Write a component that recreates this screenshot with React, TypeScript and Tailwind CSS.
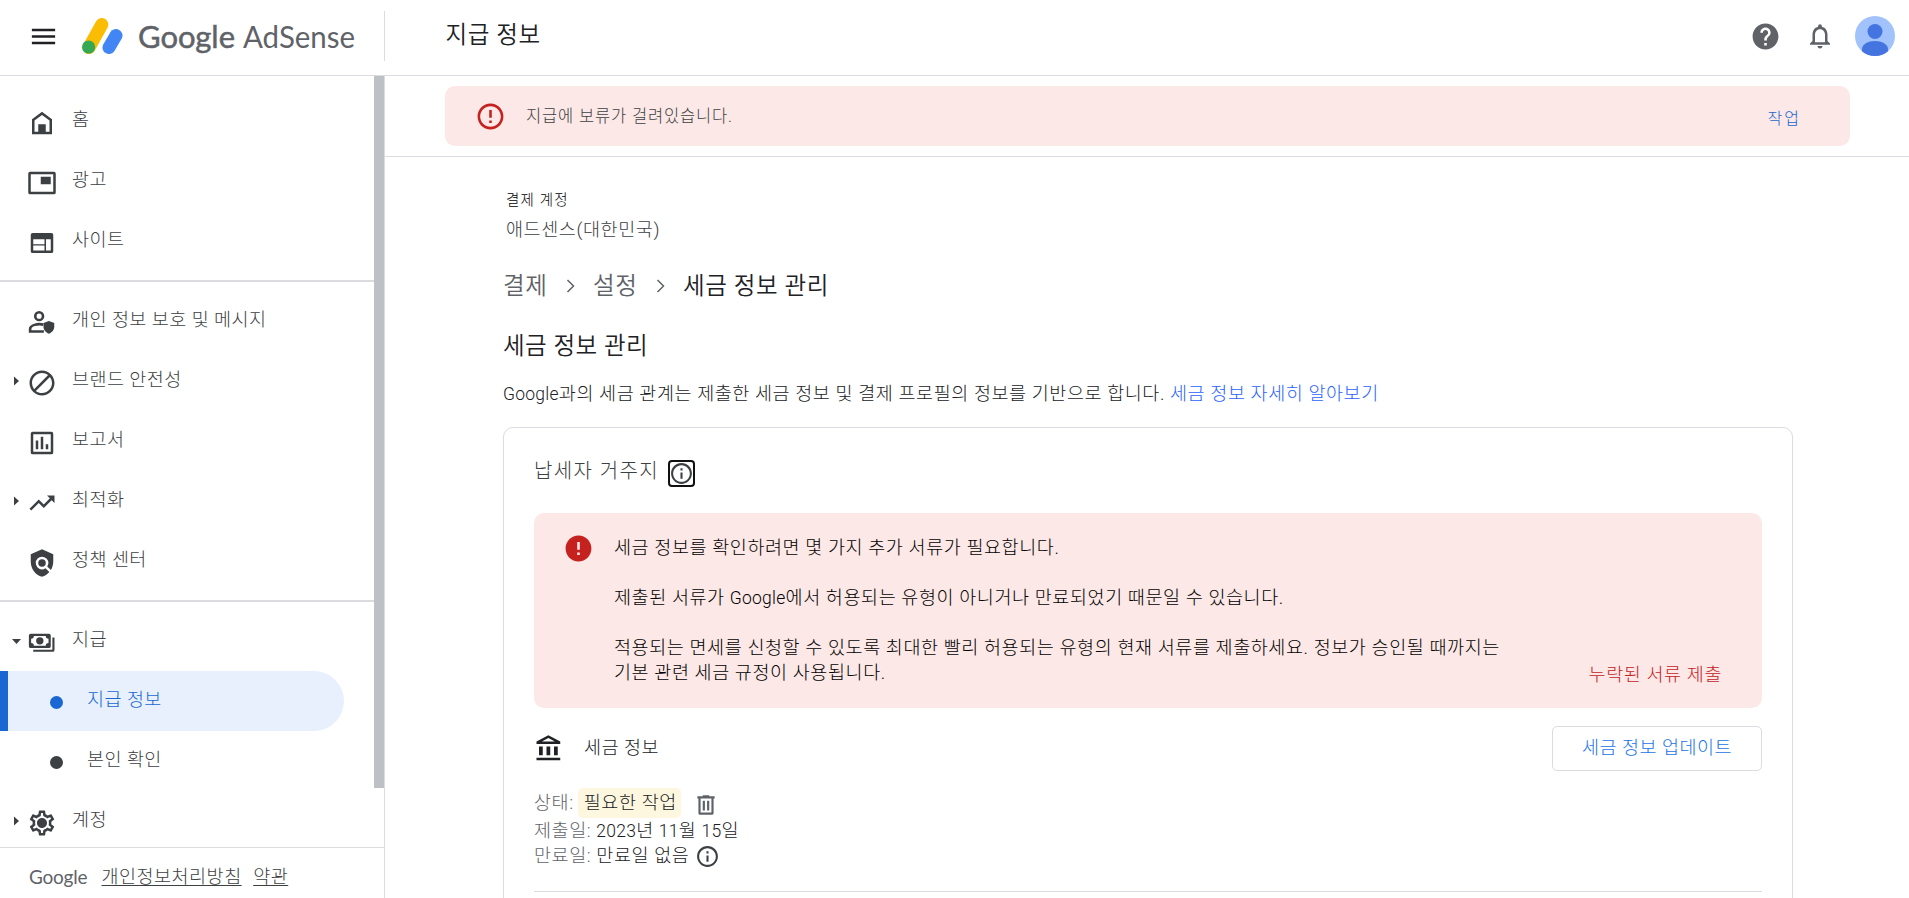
import type { ReactNode } from "react";
import {
  MdBlock,
  MdError,
  MdErrorOutline,
  MdHelp,
  MdInfoOutline,
  MdMenu,
  MdNotificationsNone,
  MdOutlineSettings,
  MdPolicy,
  MdTrendingUp,
} from "react-icons/md";

type NavItem = {
  label: string;
  icon: ReactNode;
  arrow?: "right" | "down";
};

function Icon({ d, size = 30 }: { d: string; size?: number }) {
  return (
    <svg width={size} height={size} viewBox="0 0 24 24" fill="currentColor" fillRule="evenodd">
      <path d={d} />
    </svg>
  );
}

const HOME = "M12 3 4 9v12h16V9zm0 2.5 6 4.5v9h-3v-6H9v6H6v-9z";
const ADS =
  "M2.5 3h19A1.5 1.5 0 0 1 23 4.5v15a1.5 1.5 0 0 1-1.5 1.5h-19A1.5 1.5 0 0 1 1 19.5v-15A1.5 1.5 0 0 1 2.5 3zM3 5v14h18V5zM11 7h8v6h-8z";
const SITES =
  "M4.5 4h15A1.5 1.5 0 0 1 21 5.5v13a1.5 1.5 0 0 1-1.5 1.5h-15A1.5 1.5 0 0 1 3 18.5v-13A1.5 1.5 0 0 1 4.5 4zM5 9v4h9V9zm0 5v4h9v-4zM15.2 9v9H19V9z";
const REPORT =
  "M4.5 3h15A1.5 1.5 0 0 1 21 4.5v15a1.5 1.5 0 0 1-1.5 1.5h-15A1.5 1.5 0 0 1 3 19.5v-15A1.5 1.5 0 0 1 4.5 3zM5 5v14h14V5zM7 10h2v7H7zM11 7h2v10h-2zM15 13h2v4h-2z";
const PAYMENTS =
  "M3 4.5h14.5A1.5 1.5 0 0 1 19 6v8.5a1.5 1.5 0 0 1-1.5 1.5H3a1.5 1.5 0 0 1-1.5-1.5V6A1.5 1.5 0 0 1 3 4.5zM5.5 6.3A2.2 2.2 0 0 1 3.3 8.5V12a2.2 2.2 0 0 1 2.2 2.2H15a2.2 2.2 0 0 1 2.2-2.2V8.5A2.2 2.2 0 0 1 15 6.3zM10.25 7.3a2.95 2.95 0 1 1 0 5.9 2.95 2.95 0 0 1 0-5.9zM20.3 7.5H22v10a1.5 1.5 0 0 1-1.5 1.5H5v-1.7h15.3z";
const TRASH = "M9 3h6v1h5v2h-1v13.5a1.5 1.5 0 0 1-1.5 1.5h-11A1.5 1.5 0 0 1 5 19.5V6H4V4h5zM7 6v13h10V6zM9 8h2v9H9zM13 8h2v9h-2z";
const BANK = "M11.5 1 2 6v2h19V6zm0 2.26L16.71 6H6.29zM4 10h3v7H4zM10 10h3v7h-3zM16 10h3v7h-3zM2 19h19v2H2z";

function PrivacyIcon() {
  return (
    <svg width={30} height={30} viewBox="0 0 24 24" fill="none">
      <circle cx="9.7" cy="6.5" r="3.1" stroke="currentColor" strokeWidth="2.1" />
      <path d="M13 13.3C8.5 12 2.5 14 2.5 16.7v2.1h11" stroke="currentColor" strokeWidth="2.1" />
      <path d="M17.5 10.3l4.3 1.7v3c0 2.6-1.8 4.7-4.3 5.5-2.5-.8-4.3-2.9-4.3-5.5v-3z" fill="currentColor" />
    </svg>
  );
}

function SettingsIcon() {
  return (
    <svg width={30} height={30} viewBox="0 0 24 24">
      <MdOutlineSettings size={24} />
      <circle cx="12" cy="12" r="3.4" fill="currentColor" />
    </svg>
  );
}

const mainItems: NavItem[] = [
  { label: "홈", icon: <Icon d={HOME} /> },
  { label: "광고", icon: <Icon d={ADS} /> },
  { label: "사이트", icon: <Icon d={SITES} /> },
];

const toolItems: NavItem[] = [
  { label: "개인 정보 보호 및 메시지", icon: <PrivacyIcon /> },
  { label: "브랜드 안전성", icon: <MdBlock size={30} />, arrow: "right" },
  { label: "보고서", icon: <Icon d={REPORT} /> },
  { label: "최적화", icon: <MdTrendingUp size={30} />, arrow: "right" },
  { label: "정책 센터", icon: <MdPolicy size={30} /> },
];

function NavRow({ item }: { item: NavItem }) {
  return (
    <a href="#" className="flex h-[60px] shrink-0 items-center">
      <span className="flex w-[26.5px] justify-center pl-[6px]">
        {item.arrow === "right" && (
          <svg width="5" height="10" viewBox="0 0 5 10" fill="currentColor">
            <path d="M0 .5 5 5 0 9.5z" />
          </svg>
        )}
        {item.arrow === "down" && (
          <svg width="9" height="5" viewBox="0 0 9 5" fill="currentColor">
            <path d="M0 0h9L4.5 5z" />
          </svg>
        )}
      </span>
      <span className="mt-1 w-[30px]">{item.icon}</span>
      <span className="ml-[15.5px]">{item.label}</span>
    </a>
  );
}

function SubRow({ label, active }: { label: string; active?: boolean }) {
  return (
    <a
      href="#"
      className={
        active
          ? "flex h-[60px] w-[344px] shrink-0 items-center rounded-r-full border-l-8 border-[#1967d2] bg-[#e8f0fe] text-[#1967d2]"
          : "flex h-[60px] w-[344px] shrink-0 items-center border-l-8 border-transparent"
      }
    >
      <span className="mt-[3px] ml-[41.5px] size-[13px] rounded-full bg-current" />
      <span className="ml-[24.5px]">{label}</span>
    </a>
  );
}

function Sidebar() {
  return (
    <aside className="flex w-[385px] shrink-0 flex-col border-r border-[#dadce0] text-[#3c4043]">
      <div className="flex min-h-0 flex-1 overflow-hidden">
        <nav className="flex w-[374px] flex-col pt-[15px] text-[18.5px] tracking-[0.45px]">
          {mainItems.map((item) => (
            <NavRow key={item.label} item={item} />
          ))}
          <hr className="my-[9px] h-[2px] shrink-0 border-0 bg-[#dadce0]" />
          {toolItems.map((item) => (
            <NavRow key={item.label} item={item} />
          ))}
          <hr className="my-[9px] h-[2px] shrink-0 border-0 bg-[#dadce0]" />
          <NavRow item={{ label: "지급", icon: <Icon d={PAYMENTS} />, arrow: "down" }} />
          <SubRow label="지급 정보" active />
          <SubRow label="본인 확인" />
          <NavRow item={{ label: "계정", icon: <SettingsIcon />, arrow: "right" }} />
        </nav>
        <div className="h-[712px] w-[10px] bg-[#bdc1c6]" />
      </div>
      <footer className="flex h-[51px] shrink-0 items-center border-t border-[#dadce0] pt-[10px] pl-[29px] text-[18.5px] tracking-[0.5px]">
        <svg width="60" height="28" viewBox="0 0 60 28" className="shrink-0 font-[Lato,sans-serif] font-normal">
          <text x="0" y="20" textLength="59" fontSize="19" fill="#5f6368">
            Google
          </text>
        </svg>
        <a href="#" className="ml-[12.5px] underline underline-offset-2">
          개인정보처리방침
        </a>
        <a href="#" className="ml-[11.5px] underline underline-offset-2">
          약관
        </a>
      </footer>
    </aside>
  );
}

function Logo() {
  return (
    <div className="flex items-center">
      <svg width="41" height="38" viewBox="0 0 41 38">
        <path d="M7 30.5 19.8 7.5" stroke="#fbbc04" strokeWidth="13" strokeLinecap="round" />
        <path d="M27 30.5 34 18.5" stroke="#4285f4" strokeWidth="13" strokeLinecap="round" />
        <circle cx="6.6" cy="30" r="6.6" fill="#34a853" />
      </svg>
      <svg width="226" height="50" viewBox="0 0 226 50" fill="#5f6368" className="ml-[14px] font-[Lato,sans-serif] font-normal">
        <text x="1" y="36.5" fontSize="31" textLength="97" stroke="#5f6368" strokeWidth="0.5">
          Google
        </text>
        <text x="106" y="36.5" fontSize="31" textLength="112" lengthAdjust="spacingAndGlyphs">
          AdSense
        </text>
      </svg>
    </div>
  );
}

function Header() {
  return (
    <header className="flex h-[76px] shrink-0 items-center border-b border-[#dadce0] pb-[3px]">
      <div className="flex h-[50px] w-[385px] items-center border-r border-[#dadce0] pl-7">
        <MdMenu size={31} className="text-[#202124]" />
        <div className="ml-[23px]">
          <Logo />
        </div>
      </div>
      <h1 className="ml-[60.5px] text-[23.5px] font-[350] tracking-[0.6px]">지급 정보</h1>
      <div className="mr-[14px] ml-auto flex items-center text-[#5f6368]">
        <MdHelp size={31} />
        <MdNotificationsNone size={30} className="ml-6" />
        <svg width="40" height="40" viewBox="0 0 40 40" className="ml-5 rounded-full">
          <rect width="40" height="40" fill="#a1c2fa" />
          <circle cx="20" cy="15.5" r="7.5" fill="#4374e0" />
          <path d="M7 36v-2.5C7 28 13 25 20 25s13 3 13 8.5V40H7z" fill="#4374e0" />
        </svg>
      </div>
    </header>
  );
}

function Latin({ children }: { children: ReactNode }) {
  return <span className="text-[17.5px] tracking-[0.25px]">{children}</span>;
}

function Chevron() {
  return (
    <svg width="9" height="14" viewBox="0 0 9 14" fill="none" className="mr-[17.5px] ml-[19px] text-[#5f6368]">
      <path d="M1.5 1 7.5 7l-6 6" stroke="currentColor" strokeWidth="1.5" />
    </svg>
  );
}

function TaxCard() {
  return (
    <section className="mt-[19px] h-[600px] rounded-[10px] border border-[#dadce0] px-[30px] pt-8">
      <div className="flex h-[27px] items-center">
        <h3 className="mb-[5px] text-[20px] tracking-[1.4px] text-[#3c4043]">납세자 거주지</h3>
        <span className="ml-[9px] flex size-[27px] items-center justify-center rounded-[4px] border-2 border-[#101010] text-[#3c4043]">
          <MdInfoOutline size={25} className="shrink-0" />
        </span>
      </div>

      <div className="mt-[26px] flex h-[195px] rounded-[10px] bg-[#fce8e6] pt-[23px] pl-[29px]">
        <MdError size={31} className="-mt-[3px] shrink-0 text-[#c5221f]" />
        <div className="ml-5 text-[18.5px] leading-[25px] tracking-[0.58px] text-black">
          <p>세금 정보를 확인하려면 몇 가지 추가 서류가 필요합니다.</p>
          <p className="mt-[25px]">
            제출된 서류가 <Latin>Google</Latin>에서 허용되는 유형이 아니거나 만료되었기 때문일 수 있습니다.
          </p>
          <p className="mt-[25px]">
            적용되는 면세를 신청할 수 있도록 최대한 빨리 허용되는 유형의 현재 서류를 제출하세요. 정보가 승인될 때까지는
            <br />
            기본 관련 세금 규정이 사용됩니다.
          </p>
        </div>
        <a href="#" className="mr-10 mb-5 ml-auto self-end text-[18.5px] leading-[25px] tracking-[0.58px] text-[#c5221f]">
          누락된 서류 제출
        </a>
      </div>

      <div className="mt-[18px] flex h-[45px] items-center text-[18.5px] tracking-[0.5px]">
        <Icon d={BANK} />
        <span className="ml-5">세금 정보</span>
        <button className="ml-auto h-[45px] w-[210px] rounded-[5px] border border-[#dadce0] tracking-[0.5px] text-[#1a73e8]">
          세금 정보 업데이트
        </button>
      </div>

      <div className="mt-[17px] text-[18.5px] leading-[25px] tracking-[0.59px]">
        <div className="flex h-[30px] items-center">
          <span className="pt-px text-[#5f6368]">상태:</span>
          <span className="ml-1 h-[30px] rounded-[5px] bg-[#fef7e0] pr-[4px] pl-[6px] leading-[31px]">필요한 작업</span>
          <span className="mt-[3px] ml-[12.5px] text-[#5f6368]">
            <Icon d={TRASH} size={26} />
          </span>
        </div>
        <div className="flex h-[25px] items-center pt-[2px]">
          <span className="text-[#5f6368]">제출일:</span>
          <span className="ml-[5px]">
            <Latin>2023</Latin>년 <Latin>11</Latin>월 <Latin>15</Latin>일
          </span>
        </div>
        <div className="flex h-[25px] items-center pt-px">
          <span className="text-[#5f6368]">만료일:</span>
          <span className="ml-[5px]">만료일 없음</span>
          <MdInfoOutline size={25} className="ml-[6px] text-[#3c4043]" />
        </div>
      </div>
      <hr className="mt-[23px] border-[#dadce0]" />
    </section>
  );
}

export default function App() {
  return (
    <div className="flex h-[898px] w-[1909px] flex-col overflow-hidden bg-white font-[Roboto,'Noto_Sans_CJK_KR',sans-serif] font-light text-[#202124]">
      <Header />
      <div className="flex min-h-0 flex-1">
        <Sidebar />
        <main className="min-w-0 flex-1 overflow-hidden">
          <div className="border-b border-[#dadce0] py-[10px] pr-[59px] pl-[60px]">
            <div className="flex h-[60px] items-center rounded-[10px] bg-[#fce8e6] pr-[49px] pl-[30px]">
              <MdErrorOutline size={31} className="text-[#c5221f]" />
              <span className="ml-5 pt-[2px] text-[16.5px] tracking-[0.85px] text-[#3c4043]">지급에 보류가 걸려있습니다.</span>
              <a href="#" className="mt-[5px] ml-auto text-[16px] tracking-[2px] text-[#1967d2]">
                작업
              </a>
            </div>
          </div>

          <div className="ml-[118px] w-[1290px] pt-[34px]">
            <p className="pl-[3px] text-[14.5px] leading-[20px] tracking-[1.2px] text-black">결제 계정</p>
            <p className="mt-[5px] pl-[3px] text-[18.5px] leading-[28px] tracking-[0.6px] text-[#3c4043]">애드센스(대한민국)</p>

            <div className="mt-[24px] flex items-center text-[23.5px] leading-[36px] font-[350] tracking-[0.6px]">
              <span className="text-[#5f6368]">결제</span>
              <Chevron />
              <span className="text-[#5f6368]">설정</span>
              <Chevron />
              <span>세금 정보 관리</span>
            </div>

            <h2 className="mt-6 text-[23.5px] leading-[36px] font-[350] tracking-[0.5px]">세금 정보 관리</h2>
            <p className="mt-4 text-[18.5px] leading-[28px] tracking-[0.57px]">
              <Latin>Google</Latin>과의 세금 관계는 제출한 세금 정보 및 결제 프로필의 정보를 기반으로 합니다.{" "}
              <a href="#" className="text-[#2962ff]">
                세금 정보 자세히 알아보기
              </a>
            </p>
            <TaxCard />
          </div>
        </main>
      </div>
    </div>
  );
}
